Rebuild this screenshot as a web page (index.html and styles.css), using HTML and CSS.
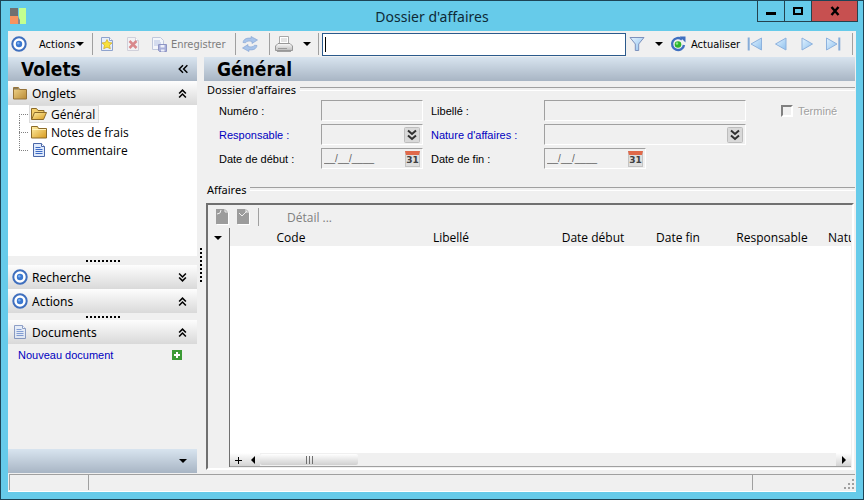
FILE: index.html
```html
<!DOCTYPE html>
<html lang="fr">
<head>
    <meta charset="UTF-8">
    <meta name="viewport" content="width=device-width, initial-scale=1.0">
    <title>Dossier d'affaires</title>
    <link rel="stylesheet" href="styles.css">
</head>
<body>
    <svg class="sprite" aria-hidden="true">
        <defs>
            <linearGradient id="gold" x1="0" y1="0" x2="1" y2="1">
                <stop offset="0" stop-color="#fff0a8"/>
                <stop offset="1" stop-color="#d99a1c"/>
            </linearGradient>
            <linearGradient id="bronze" x1="0" y1="0" x2="1" y2="1">
                <stop offset="0" stop-color="#f2d68c"/>
                <stop offset="1" stop-color="#b98a34"/>
            </linearGradient>
            <linearGradient id="sky" x1="0" y1="0" x2="1" y2="1">
                <stop offset="0" stop-color="#e4f3ff"/>
                <stop offset="1" stop-color="#8fc1ee"/>
            </linearGradient>
            <linearGradient id="steel" x1="0" y1="0" x2="0" y2="1">
                <stop offset="0" stop-color="#fafafa"/>
                <stop offset="1" stop-color="#bcbcbc"/>
            </linearGradient>
        </defs>
        <symbol id="i-target" viewBox="0 0 16 16">
            <circle cx="8" cy="8" r="6.7" fill="#fff" stroke="#3f6fbe" stroke-width="2"/>
            <circle cx="8" cy="8" r="3.2" fill="#3b78d0"/>
            <circle cx="7.3" cy="7.2" r="1.2" fill="#79aef0"/>
        </symbol>
        <symbol id="i-new" viewBox="0 0 16 16">
            <path d="M2.5 1.5h8l3 3v10h-11z" fill="#e6eefc" stroke="#8fa3cd"/>
            <path d="M10.5 1.5v3h3" fill="#fff" stroke="#8fa3cd"/>
            <path d="M8 3.5l1.6 3 3.4.4-2.5 2.3.8 3.5L8 11.2l-3.3 1.5.8-3.5L3 6.9l3.4-.4z" fill="#f8e13c" stroke="#cfa920" stroke-width=".7"/>
        </symbol>
        <symbol id="i-delete" viewBox="0 0 16 16">
            <path d="M2.5 1.5h8l3 3v10h-11z" fill="#f2f2f4" stroke="#d0d0da"/>
            <path d="M10.5 1.5v3h3" fill="#fff" stroke="#d0d0da"/>
            <path d="M4.5 5l7 7M11.5 5l-7 7" stroke="#d9888c" stroke-width="2.5"/>
        </symbol>
        <symbol id="i-save" viewBox="0 0 16 16">
            <path d="M1.5 1.5h8l3 3v9h-11z" fill="#f4f6fb" stroke="#c0c8dc"/>
            <path d="M3 5h6M3 7h7M3 9h4" stroke="#b4c2e2"/>
            <path d="M7.5 8.5h8v7h-7l-1-1z" fill="#a9b0da" stroke="#8e95c4"/>
            <path d="M9.5 9h4v2.5h-4zM10 13.5h3.5v2H10z" fill="#eef0fa"/>
        </symbol>
        <symbol id="i-sync" viewBox="0 0 16 16">
            <path d="M1 6.5C1.500 3 5 1.500 9 2.300V.5L15.500 4 10 7.500V5.500C7 4.700 4.500 5 3.500 6.800z" fill="#a8c4ea" stroke="#7f9fd0" stroke-width=".6"/>
            <path d="M15 9.500C14.500 13 11 14.500 7 13.700V15.500L.5 12 6 8.500V10.500C9 11.300 11.500 11 12.500 9.200z" fill="#a8c4ea" stroke="#7f9fd0" stroke-width=".6"/>
        </symbol>
        <symbol id="i-print" viewBox="0 0 18 18">
            <path d="M4.5 9V1.5h9V9" fill="#fff" stroke="#a8a8a8"/>
            <path d="M6 4h6M6 6h6" stroke="#c8c8c8"/>
            <path d="M3 8.5h12l2.5 2.5v4.5H.5V11z" fill="url(#steel)" stroke="#989898"/>
            <path d="M3 13.500h9" stroke="#9a9a9a"/>
            <path d="M2 16.5h14" stroke="#a0a0a0"/>
        </symbol>
        <symbol id="i-funnel" viewBox="0 0 16 16">
            <path d="M1 1.5h14L9.7 8v6.5H6.3V8z" fill="url(#sky)" stroke="#7d92bd"/>
        </symbol>
        <symbol id="i-refresh" viewBox="0 0 16 16">
            <path d="M12 3.5A6 6 0 1 0 14 9" fill="none" stroke="#3f6fc0" stroke-width="2.4"/>
            <path d="M9.5.5h6v6z" fill="#3f6fc0"/>
            <circle cx="8" cy="8.5" r="3.3" fill="#2db52d"/>
            <circle cx="7" cy="7.5" r="1.2" fill="#8fe68f"/>
        </symbol>
        <symbol id="i-first" viewBox="0 0 16 16">
            <path d="M1.7 1.5v13" stroke="#86acd8" stroke-width="2"/>
            <path d="M14.5 2v12L4 8z" fill="url(#sky)" stroke="#8db2de"/>
        </symbol>
        <symbol id="i-prev" viewBox="0 0 16 16">
            <path d="M13 2v12L2.5 8z" fill="url(#sky)" stroke="#8db2de"/>
        </symbol>
        <symbol id="i-next" viewBox="0 0 16 16">
            <path d="M3 2v12l10.5-6z" fill="url(#sky)" stroke="#8db2de"/>
        </symbol>
        <symbol id="i-last" viewBox="0 0 16 16">
            <path d="M14.3 1.5v13" stroke="#86acd8" stroke-width="2"/>
            <path d="M1.5 2v12L12 8z" fill="url(#sky)" stroke="#8db2de"/>
        </symbol>
        <symbol id="i-binder" viewBox="0 0 16 16">
            <path d="M1.5 2.5h5l1 2h7v9.5h-13z" fill="url(#bronze)" stroke="#957238"/>
            <path d="M2 3h4l1 1.5H2z" fill="#8a7a5c"/>
        </symbol>
        <symbol id="i-folder" viewBox="0 0 16 16">
            <path d="M.5 2.5h6l1 2h8v9.5H.5z" fill="url(#gold)" stroke="#8c6a28"/>
            <path d="M1 5.5h14" stroke="#fff3c0"/>
        </symbol>
        <symbol id="i-open" viewBox="0 0 16 16">
            <path d="M.5 13.5v-11h5l1.5 2h6v3" fill="#f3cf6c" stroke="#8c6a28"/>
            <path d="M3.5 6.5h12l-3 7H.7z" fill="url(#gold)" stroke="#8c6a28"/>
        </symbol>
        <symbol id="i-doc" viewBox="0 0 16 16">
            <path d="M2.5 1.5h8l3 3v10h-11z" fill="#dfeafc" stroke="#4a67a8"/>
            <path d="M10.5 1.5v3h3" fill="#fff" stroke="#4a67a8"/>
            <path d="M4.5 5.5h5M4.5 7.5h7M4.5 9.5h7M4.5 11.5h7" stroke="#3d6ac4"/>
        </symbol>
        <symbol id="i-up" viewBox="0 0 8 8">
            <path d="M1 4l3-3 3 3M1 7.5l3-3 3 3" fill="none" stroke="#000" stroke-width="1.4"/>
        </symbol>
        <symbol id="i-down" viewBox="0 0 8 8">
            <path d="M1 .5l3 3 3-3M1 4l3 3 3-3" fill="none" stroke="#000" stroke-width="1.4"/>
        </symbol>
        <symbol id="i-back" viewBox="0 0 8 8">
            <path d="M4 1L1 4l3 3M7.5 1l-3 3 3 3" fill="none" stroke="#000" stroke-width="1.2"/>
        </symbol>
        <symbol id="i-plus" viewBox="0 0 10 10">
            <path d="M0 0h10v10H0z" fill="#3b9a35"/>
            <path d="M5 2v6M2 5h6" stroke="#fff" stroke-width="2"/>
        </symbol>
        <symbol id="i-choose" viewBox="0 0 16 16">
            <rect x=".5" y=".5" width="15" height="15" rx="1" fill="#d9d9d9" stroke="#bdbdbd"/>
            <path d="M4 3.5L8 7l4-3.5M4 8.5L8 12l4-3.5" fill="none" stroke="#303030" stroke-width="2"/>
        </symbol>
        <symbol id="i-page" viewBox="0 0 14 16">
            <path d="M1 1h9l3 3v12H1z" fill="#fff"/>
            <path d="M0 0h9l3 3v12H0z" fill="#9c9c9c"/>
            <path d="M1 5l3-1 1-3M9 0v3h3" fill="none" stroke="#eee"/>
        </symbol>
        <symbol id="i-page-check" viewBox="0 0 14 16">
            <path d="M1 1h9l3 3v12H1z" fill="#fff"/>
            <path d="M0 0h9l3 3v12H0z" fill="#9c9c9c"/>
            <path d="M2 4l3 3 5-5M9 0v3h3" fill="none" stroke="#eee"/>
        </symbol>
    </svg>

    <div class="window">
        <header class="titlebar">
            <svg class="logo" viewBox="0 0 16 16">
                <path d="M0 0h8v8H0z" fill="#707070"/>
                <path d="M0 8h8l2 8H0z" fill="#f7935f"/>
                <path d="M9 0h7v16h-6L9 9z" fill="#c3ff8f"/>
                <path d="M8 9l2 3v4H8z" fill="#888"/>
            </svg>
            <h1>Dossier d'affaires</h1>
            <div class="window-buttons">
                <button type="button" aria-label="Réduire"><svg viewBox="0 0 12 12"><path d="M1 8.5h10" stroke="#000" stroke-width="3"/></svg></button>
                <button type="button" aria-label="Agrandir"><svg viewBox="0 0 12 12"><path d="M2 3h8v6H2z" fill="none" stroke="#000" stroke-width="2"/></svg></button>
                <button type="button" class="close" aria-label="Fermer"><svg viewBox="0 0 12 12"><path d="M2.5 2l7 8M9.5 2l-7 8" stroke="#000" stroke-width="2.4"/></svg></button>
            </div>
        </header>

        <nav class="toolbar">
            <button type="button" class="tool actions"><svg class="icon"><use href="#i-target"/></svg><span>Actions</span><i class="caret"></i></button>
            <span class="sep"></span>
            <button type="button" class="tool new" aria-label="Nouveau"><svg class="icon"><use href="#i-new"/></svg></button>
            <button type="button" class="tool" aria-label="Supprimer" disabled><svg class="icon"><use href="#i-delete"/></svg></button>
            <button type="button" class="tool save" disabled><svg class="icon"><use href="#i-save"/></svg><span>Enregistrer</span></button>
            <span class="sep"></span>
            <button type="button" class="tool sync" aria-label="Synchroniser"><svg class="icon"><use href="#i-sync"/></svg></button>
            <span class="sep"></span>
            <button type="button" class="tool print" aria-label="Imprimer"><svg class="icon"><use href="#i-print"/></svg><i class="caret"></i></button>
            <span class="sep"></span>
            <input type="text" class="search" aria-label="Rechercher" autofocus>
            <button type="button" class="tool filter" aria-label="Filtrer"><svg class="icon"><use href="#i-funnel"/></svg><i class="caret"></i></button>
            <button type="button" class="tool refresh"><svg class="icon"><use href="#i-refresh"/></svg><span>Actualiser</span></button>
            <button type="button" class="tool move" aria-label="Premier"><svg class="icon"><use href="#i-first"/></svg></button>
            <button type="button" class="tool move" aria-label="Précédent"><svg class="icon"><use href="#i-prev"/></svg></button>
            <button type="button" class="tool move" aria-label="Suivant"><svg class="icon"><use href="#i-next"/></svg></button>
            <button type="button" class="tool move" aria-label="Dernier"><svg class="icon"><use href="#i-last"/></svg></button>
            <span class="sep"></span>
        </nav>

        <div class="workspace">
            <aside class="panes">
                <div class="band">
                    <h2>Volets</h2>
                    <button type="button" class="fold" aria-label="Masquer les volets"><svg><use href="#i-back"/></svg></button>
                </div>
                <button type="button" class="section"><svg class="icon"><use href="#i-binder"/></svg><span>Onglets</span><svg class="chevron"><use href="#i-up"/></svg></button>
                <ul class="tree">
                    <li><a href="#general" class="selected"><svg class="icon"><use href="#i-open"/></svg><span>Général</span></a></li>
                    <li><a href="#notes"><svg class="icon"><use href="#i-folder"/></svg><span>Notes de frais</span></a></li>
                    <li><a href="#commentaire"><svg class="icon"><use href="#i-doc"/></svg><span>Commentaire</span></a></li>
                </ul>
                <div class="grip"></div>
                <button type="button" class="section"><svg class="icon"><use href="#i-target"/></svg><span>Recherche</span><svg class="chevron"><use href="#i-down"/></svg></button>
                <button type="button" class="section"><svg class="icon"><use href="#i-target"/></svg><span>Actions</span><svg class="chevron"><use href="#i-up"/></svg></button>
                <div class="grip low"></div>
                <button type="button" class="section"><svg class="icon pale"><use href="#i-doc"/></svg><span>Documents</span><svg class="chevron"><use href="#i-up"/></svg></button>
                <div class="documents">
                    <a href="#nouveau">Nouveau document</a>
                    <button type="button" class="add" aria-label="Ajouter"><svg><use href="#i-plus"/></svg></button>
                </div>
                <div class="band foot"><button type="button" class="fold" aria-label="Options"><i class="caret"></i></button></div>
            </aside>

            <div class="splitter"></div>

            <main class="content" id="general">
                <div class="band"><h2>Général</h2></div>
                <h3 class="group">Dossier d'affaires</h3>
                <form class="fields">
                    <label for="numero">Numéro :</label>
                    <div class="field"><input type="text" id="numero" readonly></div>
                    <label for="libelle">Libellé :</label>
                    <div class="field"><input type="text" id="libelle" readonly></div>
                    <div class="done"><input type="checkbox" id="termine" disabled><label for="termine">Terminé</label></div>

                    <label for="responsable" class="link">Responsable :</label>
                    <div class="field"><input type="text" id="responsable" readonly><button type="button" aria-label="Choisir le responsable"><svg><use href="#i-choose"/></svg></button></div>
                    <label for="nature" class="link">Nature d'affaires :</label>
                    <div class="field"><input type="text" id="nature" readonly><button type="button" aria-label="Choisir la nature"><svg><use href="#i-choose"/></svg></button></div>
                    <span></span>

                    <label for="debut">Date de début :</label>
                    <div class="field"><input type="text" id="debut" value="__/__/____" readonly><button type="button" class="calendar">31</button></div>
                    <label for="fin">Date de fin :</label>
                    <div class="field date"><input type="text" id="fin" value="__/__/____" readonly><button type="button" class="calendar">31</button></div>
                </form>
                <h3 class="group">Affaires</h3>
                <section class="grid">
                    <div class="grid-tools">
                        <button type="button" aria-label="Ajouter une affaire" disabled><svg><use href="#i-page"/></svg></button>
                        <button type="button" aria-label="Modifier une affaire" disabled><svg><use href="#i-page-check"/></svg></button>
                        <span class="sep"></span>
                        <button type="button" class="detail" disabled>Détail ...</button>
                    </div>
                    <div class="grid-body">
                        <div class="row-head"><i class="caret"></i></div>
                        <div class="sheet">
                            <div class="rows">
                                <table>
                                    <thead>
                                        <tr>
                                            <th class="code">Code</th>
                                            <th class="name">Libellé</th>
                                            <th class="start">Date début</th>
                                            <th class="end">Date fin</th>
                                            <th class="owner">Responsable</th>
                                            <th class="nature">Nature</th>
                                        </tr>
                                    </thead>
                                </table>
                            </div>
                            <div class="scroll">
                                <button type="button" aria-label="Nouvelle ligne"><svg viewBox="0 0 8 8"><path d="M4.5 1v7M1 4.5h7" stroke="#000"/></svg></button>
                                <button type="button" aria-label="Défiler à gauche"><svg viewBox="0 0 8 8"><path d="M6 0v8L2 4z"/></svg></button>
                                <div class="track"><div class="thumb"><i></i></div></div>
                                <button type="button" aria-label="Défiler à droite"><svg viewBox="0 0 8 8"><path d="M2 0v8l4-4z"/></svg></button>
                            </div>
                        </div>
                    </div>
                </section>
            </main>
        </div>

        <footer class="status">
            <span class="cell short"></span>
            <span class="cell"></span>
            <span class="cell corner"><svg viewBox="0 0 12 12"><path d="M9 1h2v2H9zM5 5h2v2H5zM9 5h2v2H9zM1 9h2v2H1zM5 9h2v2H5zM9 9h2v2H9z" fill="#a0a0a0"/></svg></span>
        </footer>
    </div>
</body>
</html>
```

FILE: styles.css
```css
* {
    box-sizing: border-box;
}
body {
    margin: 0;
    font-family: "Open Sans", "Noto Sans", sans-serif;
    font-size: 12px;
    color: #000;
}
button, input {
    font: inherit;
    color: inherit;
    margin: 0;
    padding: 0;
    border: 0;
    background: none;
}
h1, h2, h3, ul {
    margin: 0;
    padding: 0;
    font-weight: 400;
}
a {
    color: inherit;
    text-decoration: none;
}
svg {
    display: block;
    flex: none;
}
.sprite {
    position: absolute;
    width: 0;
    height: 0;
}
.icon {
    width: 16px;
    height: 16px;
}
.pale {
    opacity: 0.6;
}
.caret {
    border: 4px solid transparent;
    border-top-color: #000;
    border-bottom: 0;
}
.sep {
    width: 1px;
    height: 22px;
    background: #a0a0a0;
}

/* Window frame */
.window {
    display: flex;
    flex-direction: column;
    height: 100vh;
    padding: 0 7px 7px;
    border: 1px solid #1d4456;
    background: #66cbea;
}
.titlebar {
    display: grid;
    grid-template-columns: 1fr auto 1fr;
    align-items: center;
    height: 30px;
    flex: none;
}
.logo {
    width: 16px;
    height: 16px;
    margin-left: 2px;
}
.titlebar h1 {
    font-family: "Noto Sans", sans-serif;
    font-size: 14px;
    color: #0e2a36;
}
.window-buttons {
    display: flex;
    align-self: start;
    justify-self: end;
    margin-right: -2px;
    border: 1px solid #24424e;
    border-top: 0;
}
.window-buttons button {
    display: flex;
    align-items: center;
    justify-content: center;
    width: 27px;
    height: 20px;
    border-right: 1px solid #24424e;
}
.window-buttons .close {
    width: 45px;
    border-right: 0;
    background: #c75050;
}
.window-buttons svg {
    width: 12px;
    height: 12px;
}

/* Toolbar */
.toolbar {
    display: flex;
    align-items: center;
    height: 26px;
    flex: none;
    background: #f0f0f0;
    font-family: "DejaVu Sans Condensed", "Noto Sans", sans-serif;
    font-size: 11px;
}
.tool {
    display: flex;
    align-items: center;
    padding: 0 5px;
}
.tool:disabled {
    color: #7c7c7c;
}
.actions {
    width: 84px;
    padding: 0 0 0 3px;
}
.actions span {
    margin-left: 12px;
    margin-right: 1px;
}
.new {
    padding-left: 6px;
}
.save {
    width: 89px;
}
.save span {
    margin-left: 4px;
}
.sync {
    width: 33px;
    padding-left: 6px;
}
.print {
    width: 48px;
    padding: 0 7px 0 5px;
    justify-content: space-between;
}
.print .icon {
    width: 18px;
    height: 18px;
}
.search {
    flex: 1;
    min-width: 0;
    height: 23px;
    margin-left: 3px;
    padding: 0 2px;
    border: 1px solid #2b5a8c;
    background: linear-gradient(#000, #000) 2px 3px / 1px 15px no-repeat #fff;
    caret-color: transparent;
    outline: 0;
}
.filter {
    width: 38px;
    padding: 0 1px 0 3px;
    justify-content: space-between;
}
.refresh {
    width: 78px;
    padding-left: 6px;
}
.refresh span {
    margin-left: 5px;
}
.move {
    width: 26px;
}
.toolbar > .sep:last-child {
    margin-left: 6px;
    margin-right: 3px;
}

/* Side panes */
.workspace {
    display: flex;
    flex: 1;
    min-height: 0;
    background: #f0f0f0;
}
.panes {
    display: flex;
    flex-direction: column;
    width: 189px;
    flex: none;
}
.band {
    display: flex;
    align-items: center;
    justify-content: space-between;
    height: 24px;
    flex: none;
    padding: 0 9px 0 13px;
    background: linear-gradient(#d8e4ef, #a8b5c4);
}
.band h2 {
    font-family: "DejaVu Sans Condensed", "DejaVu Sans", sans-serif;
    font-size: 19px;
    font-weight: 700;
    line-height: 24px;
}
.fold {
    display: flex;
    justify-content: center;
    width: 10px;
}
.fold svg {
    width: 10px;
    height: 10px;
}
.foot {
    justify-content: flex-end;
}
.section {
    display: flex;
    align-items: center;
    height: 24px;
    flex: none;
    padding: 0 10px 0 4px;
    gap: 4px;
    background: linear-gradient(#fdfdfd, #d9d9d9);
    font-family: "Noto Sans", sans-serif;
    text-align: left;
}
.section span {
    flex: 1;
}
.chevron {
    width: 9px;
    height: 9px;
}
.tree {
    flex: 1;
    padding: 0 0 0 11px;
    background: #fff;
    list-style: none;
}
.tree li {
    display: flex;
    align-items: center;
    height: 18px;
    background: repeating-linear-gradient(#808080 0 1px, transparent 1px 2px) left top / 1px 100% no-repeat;
}
.tree li:first-child {
    background-position: left bottom;
    background-size: 1px 50%;
}
.tree li:last-child {
    background-size: 1px 50%;
}
.tree li::before {
    content: "";
    width: 10px;
    height: 1px;
    background: repeating-linear-gradient(90deg, #808080 0 1px, transparent 1px 2px);
}
.tree a {
    display: flex;
    align-items: center;
    gap: 4px;
    height: 18px;
    padding: 0 3px 0 1px;
    border: 1px solid transparent;
}
.tree .selected {
    border-color: #dcdcdc;
    background: #f3f3f3;
}
.grip {
    height: 9px;
    flex: none;
    background: repeating-linear-gradient(90deg, #000 0 2px, transparent 2px 4px) center / 34px 2px no-repeat;
}
.low {
    height: 7px;
}
.documents {
    display: flex;
    align-items: center;
    justify-content: space-between;
    height: 22px;
    flex: none;
    margin-bottom: 83px;
    padding: 0 15px 0 10px;
    font-family: "Liberation Sans", sans-serif;
    font-size: 11px;
    color: #0000c0;
}
.add svg {
    width: 10px;
    height: 10px;
}
.splitter {
    display: flex;
    align-items: center;
    justify-content: center;
    width: 7px;
    flex: none;
}
.splitter::before {
    content: "";
    width: 2px;
    height: 34px;
    background: repeating-linear-gradient(#000 0 2px, transparent 2px 4px);
}

/* Main content */
.content {
    display: flex;
    flex-direction: column;
    flex: 1;
    min-width: 0;
    padding: 0 1px 3px 0;
}
.group {
    display: flex;
    align-items: center;
    gap: 4px;
    height: 16px;
    padding-left: 3px;
    font-family: "Noto Sans", sans-serif;
    font-size: 11px;
}
.group::after {
    content: "";
    flex: 1;
    height: 2px;
    border-top: 1px solid #a0a0a0;
    border-bottom: 1px solid #fff;
}
.fields {
    display: grid;
    grid-template-columns: 94px 102px 105px 202px auto;
    grid-auto-rows: 21px;
    gap: 3px 8px;
    align-items: center;
    padding: 3px 8px 12px 15px;
    font-family: "Liberation Sans", sans-serif;
    font-size: 11px;
}
.link {
    color: #0000c0;
}
.field {
    display: flex;
    align-items: center;
    height: 21px;
    padding: 0 2px;
    border: 1px solid;
    border-color: #a0a0a0 #fff #fff #a0a0a0;
}
.date {
    width: 102px;
}
.field input {
    flex: 1;
    width: 100%;
    min-width: 0;
    font-size: 10px;
    color: #606060;
}
.field svg {
    width: 16px;
    height: 16px;
}
.calendar {
    width: 15px;
    height: 16px;
    border: 1px solid #c4c4c4;
    border-top: 4px solid #e0694a;
    background: #dedede;
    font-family: "DejaVu Sans", sans-serif;
    font-size: 9px;
    font-weight: 700;
    line-height: 11px;
    color: #404040;
}
.done {
    display: flex;
    align-items: center;
    gap: 5px;
    margin-left: 27px;
    color: #a0a0a0;
    text-shadow: 1px 1px #fff;
}
.done input {
    appearance: none;
    width: 12px;
    height: 12px;
    border: 2px solid;
    border-color: #808080 #fff #fff #808080;
}

/* Grid of affaires */
.grid {
    display: flex;
    flex-direction: column;
    flex: 1;
    min-height: 0;
    margin: 6px 1px 0 2px;
    padding: 1px 1px 1px 2px;
    border: 2px solid;
    border-color: #707070 #fff #fff #707070;
}
.grid-tools {
    display: flex;
    align-items: center;
    gap: 7px;
    height: 22px;
    flex: none;
    padding-left: 6px;
}
.grid-tools svg {
    width: 14px;
    height: 16px;
}
.grid-tools .sep {
    height: 18px;
    margin: 0 21px 0 0;
}
.detail:disabled {
    color: #808080;
}
.grid-body {
    display: flex;
    flex: 1;
    min-height: 0;
}
.row-head {
    display: flex;
    justify-content: center;
    width: 20px;
    flex: none;
    padding: 8px 3px 0 0;
    border-right: 1px solid #707070;
}
.row-head .caret {
    height: 4px;
}
.sheet {
    display: flex;
    flex-direction: column;
    flex: 1;
    min-width: 0;
    background: #fff;
}
.rows {
    flex: 1;
    overflow: hidden;
    background: linear-gradient(#f0f0f0, #f0f0f0) top / 100% 18px no-repeat;
}
table {
    width: 100%;
    min-width: 690px;
    table-layout: fixed;
    border-collapse: collapse;
}
th {
    padding: 2px 0 0;
    font-weight: 400;
    line-height: 16px;
    text-align: center;
}
.code {
    width: 122px;
}
.name {
    width: 198px;
}
.start {
    width: 86px;
}
.end {
    width: 84px;
}
.owner {
    width: 104px;
}
.nature {
    padding-left: 4px;
    text-align: left;
}
.scroll {
    display: flex;
    height: 14px;
    flex: none;
    border-bottom: 1px solid #a0a0a0;
    background: #f0f0f0;
}
.scroll button {
    display: flex;
    align-items: center;
    justify-content: center;
    width: 15px;
    background: linear-gradient(#fff, #d4d4d4);
}
.scroll svg {
    width: 8px;
    height: 8px;
}
.track {
    flex: 1;
    padding: 1px 0;
}
.thumb {
    display: flex;
    align-items: center;
    justify-content: center;
    width: 98px;
    height: 11px;
    border-radius: 2px;
    background: linear-gradient(#fff, #d0d0d0);
}
.thumb i {
    width: 7px;
    height: 8px;
    background: repeating-linear-gradient(90deg, #707070 0 1px, transparent 1px 3px);
}

/* Status bar */
.status {
    display: flex;
    height: 19px;
    flex: none;
    padding: 1px;
    background: #f0f0f0;
    border-bottom: 1px solid #fff;
}
.cell {
    flex: 1;
    border-top: 1px solid #a0a0a0;
    border-left: 1px solid #a0a0a0;
}
.short {
    flex: 0 0 79px;
}
.corner {
    display: flex;
    flex: 0 0 103px;
    align-items: flex-end;
    justify-content: flex-end;
}
.corner svg {
    width: 12px;
    height: 12px;
}
```
